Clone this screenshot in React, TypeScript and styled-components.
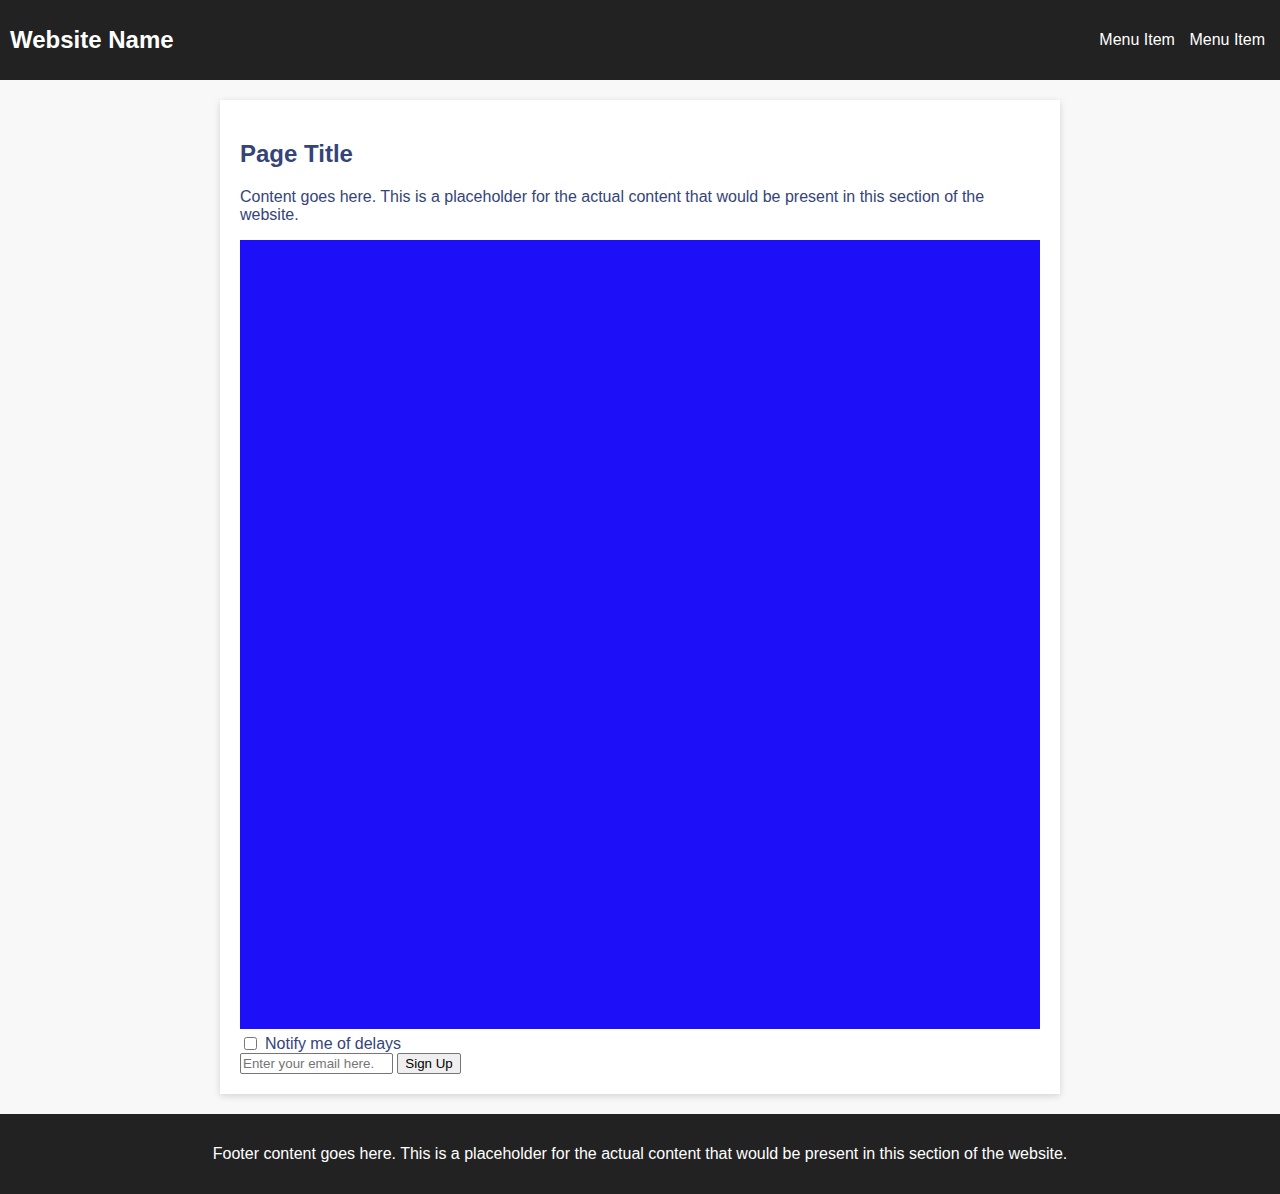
import React from "react";
import styled, { createGlobalStyle } from "styled-components";

const GlobalStyle = createGlobalStyle`
  html, body {
    margin: 0;
    padding: 0;
    background: #f8f8f8;
    font-family: "Liberation Sans", Arial, sans-serif;
  }
`;

const Header = styled.header`
  background: #222222;
  color: #ffffff;
  height: 80px;
  padding: 0 10px;
  box-sizing: border-box;
  display: flex;
  align-items: center;
  justify-content: space-between;
`;

const Logo = styled.h1`
  margin: 0;
  font-size: 24px;
  font-weight: bold;
`;

const Nav = styled.nav`
  display: flex;
  gap: 14.5px;
  padding-right: 5px;
`;

const NavLink = styled.a`
  color: #ffffff;
  font-size: 16px;
  text-decoration: none;
`;

const Main = styled.main`
  padding: 20px 0;
  display: flex;
  justify-content: center;
`;

const Card = styled.section`
  width: 840px;
  box-sizing: border-box;
  background: #ffffff;
  padding: 20px;
  box-shadow: 0 2px 7px rgba(0, 0, 0, 0.15);
  color: #34447a;
`;

const Title = styled.h2`
  font-size: 24px;
  font-weight: bold;
  margin: 20px 0 20px;
  line-height: 27.6px;
`;

const Text = styled.p`
  font-size: 16px;
  margin: 0 0 16px;
  line-height: 18.4px;
`;

const Media = styled.div`
  height: 789px;
  background: #1d10f9;
`;

const CheckRow = styled.label`
  display: flex;
  align-items: center;
  height: 24px;
  font-size: 16px;
  padding-top: 5px;
  box-sizing: border-box;
`;

const Check = styled.input`
  width: 13px;
  height: 13px;
  margin: 0 8px 0 4px;
`;

const FormRow = styled.div`
  display: flex;
  align-items: center;
  gap: 4px;
  height: 21px;
`;

const Email = styled.input`
  font-family: "Liberation Sans", Arial, sans-serif;
  font-size: 13.333px;
  width: 153px;
  height: 21px;
  box-sizing: border-box;
  padding: 1px 2px;
  border: 1px solid #767676;
  border-radius: 2px;
  margin: 0;
  &::placeholder {
    color: #757575;
  }
`;

const Button = styled.button`
  font-family: "Liberation Sans", Arial, sans-serif;
  font-size: 13.333px;
  height: 21px;
  width: 64px;
  padding: 1px 0;
  border: 1px solid #767676;
  border-radius: 2px;
  background: #efefef;
  color: #000;
  margin: 0;
`;

const Footer = styled.footer`
  background: #222222;
  color: #ffffff;
  height: 80px;
  display: flex;
  align-items: center;
  justify-content: center;
  font-size: 16px;
`;

export default function App() {
  return (
    <>
      <GlobalStyle />
      <Header>
        <Logo>Website Name</Logo>
        <Nav>
          <NavLink href="#">Menu Item</NavLink>
          <NavLink href="#">Menu Item</NavLink>
        </Nav>
      </Header>
      <Main>
        <Card>
          <Title>Page Title</Title>
          <Text>
            Content goes here. This is a placeholder for the actual content that would be present in this section of the website.
          </Text>
          <Media />
          <CheckRow>
            <Check type="checkbox" />
            Notify me of delays
          </CheckRow>
          <FormRow>
            <Email type="email" placeholder="Enter your email here." />
            <Button>Sign Up</Button>
          </FormRow>
        </Card>
      </Main>
      <Footer>
        Footer content goes here. This is a placeholder for the actual content that would be present in this section of the website.
      </Footer>
    </>
  );
}
